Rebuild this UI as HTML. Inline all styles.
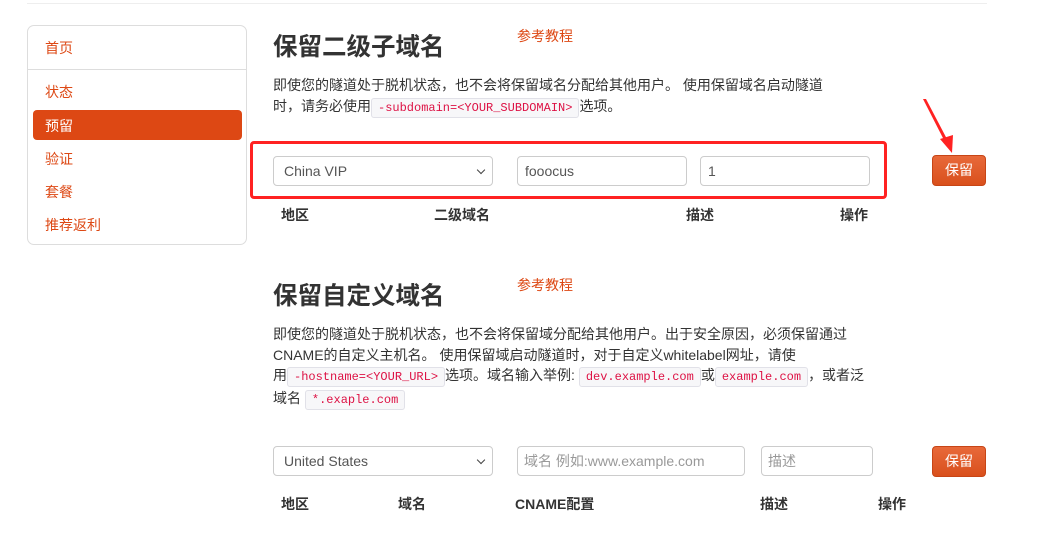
<!DOCTYPE html>
<html><head><meta charset="utf-8"><style>
*{box-sizing:border-box;margin:0;padding:0}
body{width:1049px;height:545px;background:#fff;position:relative;overflow:hidden;font-family:"Liberation Sans","Noto Sans CJK SC",sans-serif;color:#333;font-size:14px}
.a{position:absolute;white-space:nowrap}
.side{position:absolute;left:27px;top:25px;width:220px;height:220px;border:1px solid #ddd;border-radius:7px}
.si{position:absolute;left:17px;color:#dd4814;font-size:14px}
.act{position:absolute;left:5px;top:84px;width:209px;height:30px;background:#dd4814;border-radius:4px}
h1{position:absolute;font-size:24.5px;font-weight:bold;color:#333;white-space:nowrap}
.ref{color:#dd4814;font-size:14px}
.p{font-size:14px;line-height:20.5px;color:#333}
code{font-family:"Liberation Mono",monospace;font-size:12px;color:#dd1144;background:#f7f7f9;border:1px solid #e1e1e8;border-radius:3px;padding:2px 6px}
.in{position:absolute;height:30px;border:1px solid #ccc;border-radius:4px;padding-left:10px;line-height:28px;font-size:14px;color:#555;background:#fff}
.ph{color:#999}
.sel::after{content:"";position:absolute;right:8px;top:10px;width:5px;height:5px;border-right:1.6px solid #444;border-bottom:1.6px solid #444;transform:rotate(45deg)}
.btn{position:absolute;width:54px;height:31px;background:linear-gradient(#e8693a,#d9501c);border:1px solid #c74516;border-radius:4px;color:#fff;text-align:center;line-height:29px;font-size:14px}
.th{position:absolute;font-weight:bold;font-size:14px;color:#333}
</style></head><body>
<div class="a" style="left:27px;top:3px;width:960px;height:1px;background:#eee"></div>
<div class="side">
<div class="si" style="top:12px">首页</div>
<div style="position:absolute;left:0;top:43px;width:218px;height:1px;background:#ddd"></div>
<div class="si" style="top:56px">状态</div>
<div class="act"></div>
<div class="si" style="top:90px;color:#fff">预留</div>
<div class="si" style="top:123px">验证</div>
<div class="si" style="top:156px">套餐</div>
<div class="si" style="top:189px">推荐返利</div>
</div>

<h1 style="left:273px;top:28px">保留二级子域名</h1>
<div class="a ref" style="left:517px;top:26px">参考教程</div>
<div class="a p" style="left:273px;top:75px">即使您的隧道处于脱机状态，也不会将保留域名分配给其他用户。 使用保留域名启动隧道<br>时，请务必使用<code>-subdomain=&lt;YOUR_SUBDOMAIN&gt;</code>选项。</div>
<div class="a" style="left:250px;top:141px;width:637px;height:58px;border:3px solid #f22;border-radius:4px"></div>
<div class="in sel" style="left:273px;top:156px;width:220px">China VIP</div>
<div class="in" style="left:517px;top:156px;width:170px;padding-left:7px">fooocus</div>
<div class="in" style="left:700px;top:156px;width:170px;padding-left:7px">1</div>
<div class="btn" style="left:932px;top:155px">保留</div>
<svg class="a" style="left:915px;top:95px" width="45" height="62"><polygon points="8,4 11,4 33,46 30,47" fill="#f22"/><polygon points="25,44 37,58 38,40" fill="#f22"/></svg>
<div class="th" style="left:281px;top:205px">地区</div>
<div class="th" style="left:434px;top:205px">二级域名</div>
<div class="th" style="left:686px;top:205px">描述</div>
<div class="th" style="left:840px;top:205px">操作</div>

<h1 style="left:273px;top:277px">保留自定义域名</h1>
<div class="a ref" style="left:517px;top:275px">参考教程</div>
<div class="a p" style="left:273px;top:324px">即使您的隧道处于脱机状态，也不会将保留域分配给其他用户。出于安全原因，必须保留通过<br>CNAME的自定义主机名。 使用保留域启动隧道时，对于自定义whitelabel网址，请使<br>用<code>-hostname=&lt;YOUR_URL&gt;</code>选项。域名输入举例: <code>dev.example.com</code>或<code>example.com</code>，或者泛<br>域名 <code>*.exaple.com</code></div>
<div class="in sel" style="left:273px;top:446px;width:220px">United States</div>
<div class="in ph" style="left:517px;top:446px;width:228px;padding-left:6px">域名 例如:www.example.com</div>
<div class="in ph" style="left:761px;top:446px;width:112px;padding-left:6px">描述</div>
<div class="btn" style="left:932px;top:446px">保留</div>
<div class="th" style="left:281px;top:494px">地区</div>
<div class="th" style="left:398px;top:494px">域名</div>
<div class="th" style="left:515px;top:494px">CNAME配置</div>
<div class="th" style="left:760px;top:494px">描述</div>
<div class="th" style="left:878px;top:494px">操作</div>
</body></html>
